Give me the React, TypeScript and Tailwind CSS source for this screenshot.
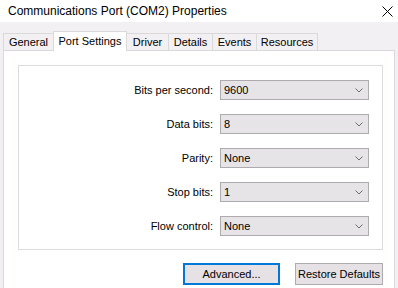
import React from 'react'

const tabs = [
  { label: 'General', w: 'w-[50px]' },
  { label: 'Port Settings', w: 'w-[74px]', active: true },
  { label: 'Driver', w: 'w-[41px]' },
  { label: 'Details', w: 'w-[44px]' },
  { label: 'Events', w: 'w-[44px]' },
  { label: 'Resources', w: 'w-[62px]' },
]

const rows = [
  { label: 'Bits per second:', value: '9600' },
  { label: 'Data bits:', value: '8' },
  { label: 'Parity:', value: 'None' },
  { label: 'Stop bits:', value: '1' },
  { label: 'Flow control:', value: 'None' },
]

function Chevron() {
  return (
    <svg width="8" height="5" viewBox="0 0 8 5" className="shrink-0">
      <path d="M0.5 0.5 L4 4 L7.5 0.5" fill="none" stroke="#6d6d6d" strokeWidth="1" />
    </svg>
  )
}

function Combo({ value }: { value: string }) {
  return (
    <div className="flex h-[20px] w-[149px] items-center justify-between border border-[#adabad] bg-[#e7e4e7] pl-[3px] pr-[5px]">
      <span>{value}</span>
      <Chevron />
    </div>
  )
}

export default function App() {
  return (
    <div className="flex h-[288px] w-[398px] flex-col overflow-hidden bg-[#f3f0f3] text-[11px] text-black [font-family:'Liberation_Sans',Arial,sans-serif]">
      <div className="flex h-[22px] shrink-0 items-center justify-between bg-white pl-[8px] pr-[5px]">
        <span className="text-[12px]">Communications Port (COM2) Properties</span>
        <svg width="11" height="11" viewBox="0 0 11 11">
          <path d="M0.5 0.5 L10.5 10.5 M10.5 0.5 L0.5 10.5" stroke="#000" strokeWidth="1" />
        </svg>
      </div>

      <div className="mt-[9px] flex h-[19px] shrink-0 items-end pl-[3px]">
        {tabs.map((t, i) =>
          t.active ? (
            <div
              key={t.label}
              className={`relative z-10 -mb-px flex h-[20px] items-start justify-center border-x border-t border-[#d9d9d9] bg-white pt-[1px] ${t.w}`}
            >
              {t.label}
            </div>
          ) : (
            <div
              key={t.label}
              className={`flex h-[17px] items-center justify-center border-t border-[#d9d9d9] bg-[#f3f0f3] ${t.w} ${i === 0 ? 'border-l' : ''} ${i === tabs.length - 1 ? 'border-r' : ''} ${i > 2 ? 'border-l' : ''}`}
            >
              {t.label}
            </div>
          ),
        )}
      </div>

      <div className="mx-[3px] flex-1 border-x border-t border-[#d9d9d9] bg-white pl-[14px] pr-[11px] pt-[14px]">
        <div className="flex flex-col gap-[14px] border border-[#dcdcdc] pb-[13px] pr-[13px] pt-[14px]">
          {rows.map((r) => (
            <div key={r.label} className="flex items-center justify-end gap-[7px]">
              <span>{r.label}</span>
              <Combo value={r.value} />
            </div>
          ))}
        </div>

        <div className="mt-[13px] flex justify-end gap-[15px]">
          <button className="h-[22px] w-[97px] border-2 border-[#0078d7] bg-[#e5e1e5]">Advanced...</button>
          <button className="h-[22px] w-[88px] border border-[#adabad] bg-[#e5e1e5]">Restore Defaults</button>
        </div>
      </div>
    </div>
  )
}
